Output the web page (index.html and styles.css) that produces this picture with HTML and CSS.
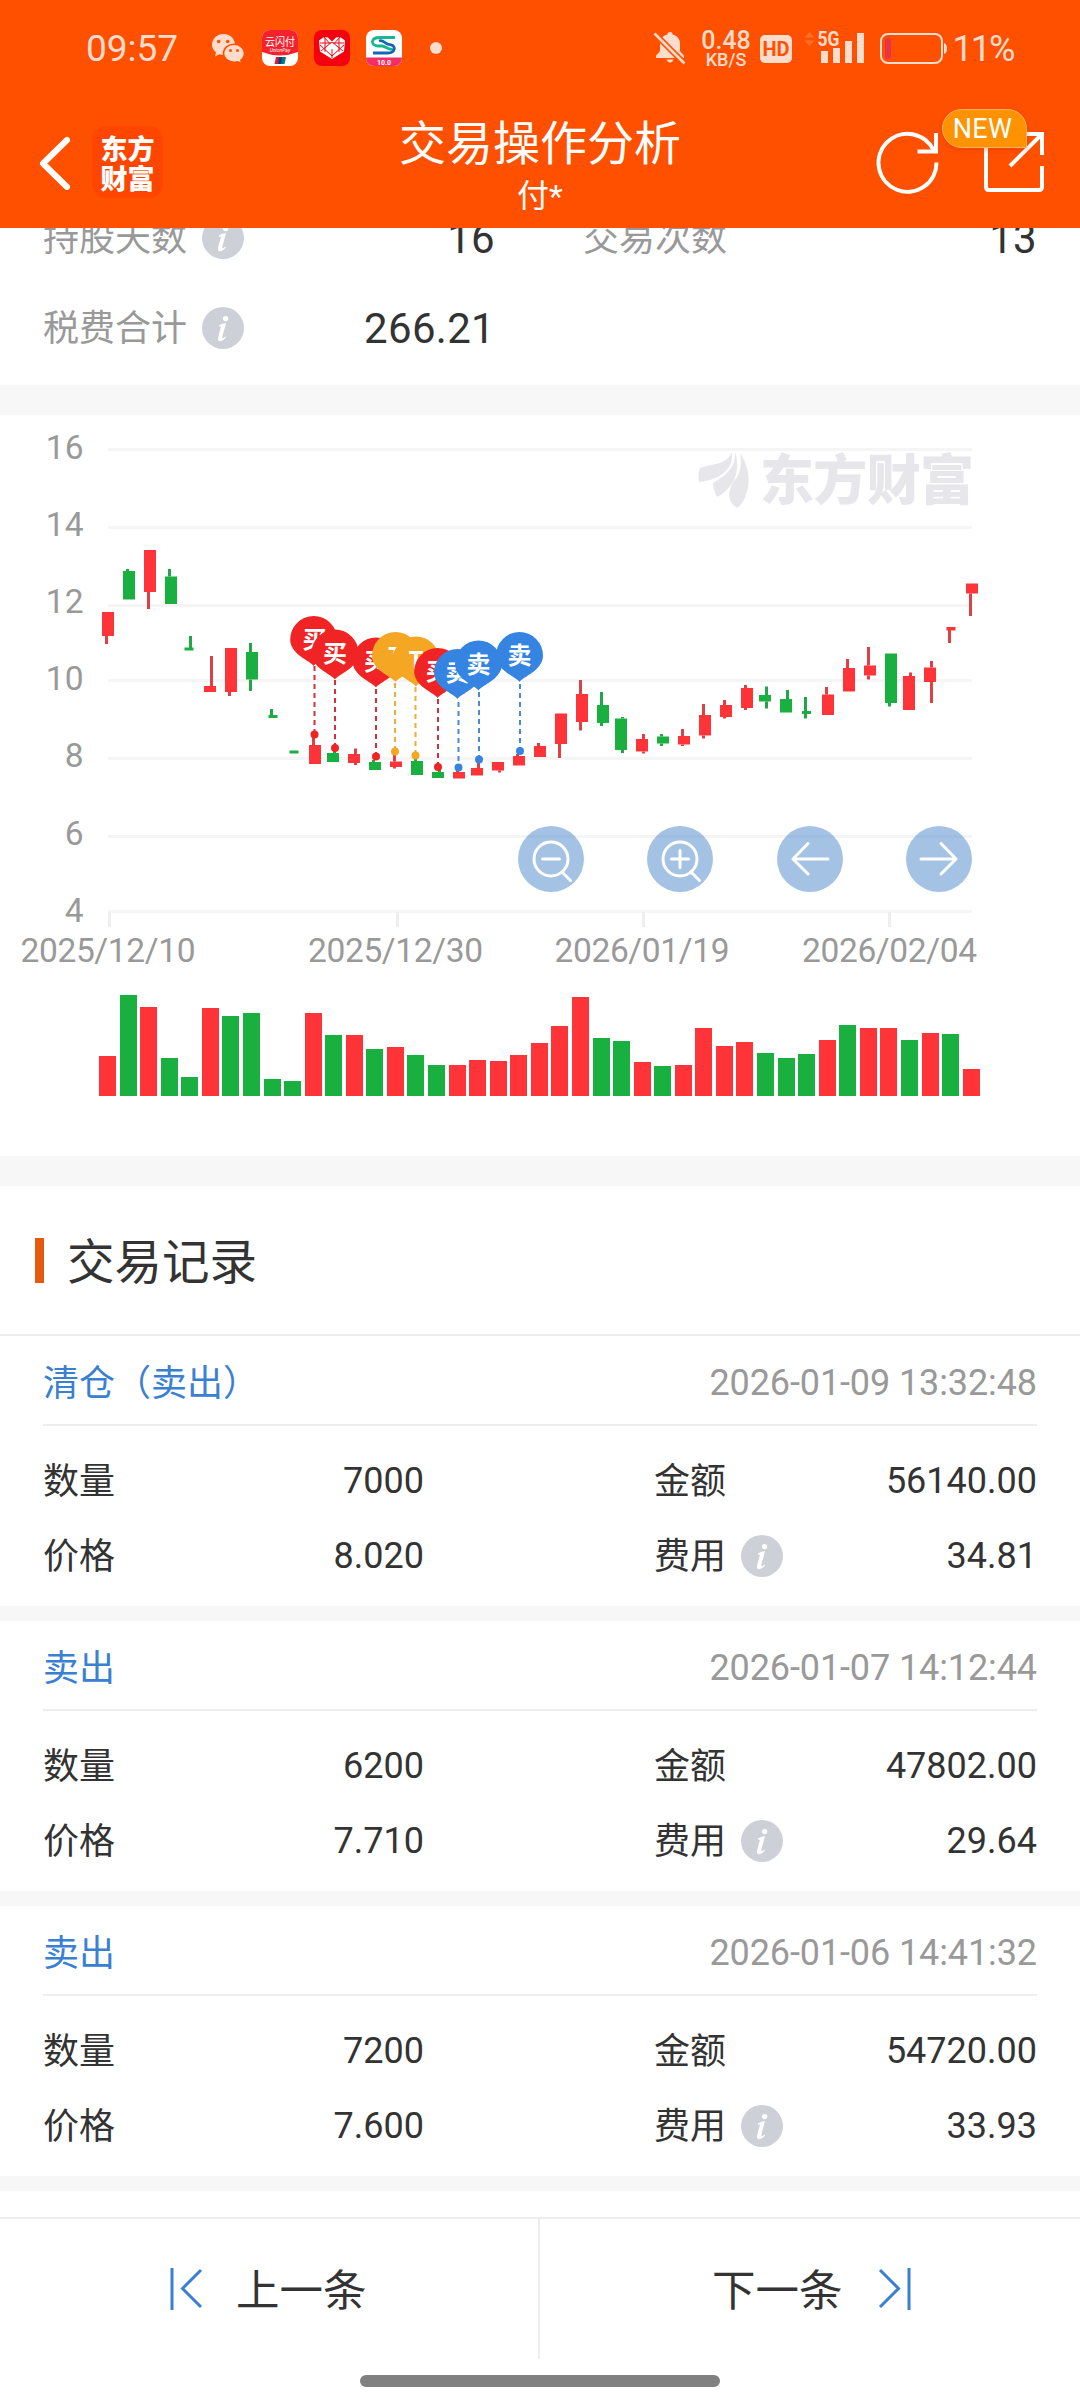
FILE: index.html
```html
<!DOCTYPE html>
<html lang="zh-CN">
<head>
<meta charset="utf-8">
<title>交易操作分析</title>
<link rel="stylesheet" href="styles.css">
</head>
<body>
<svg class="defs" width="0" height="0">
  <defs>
    <symbol id="info" viewBox="0 0 42 42">
      <circle cx="21" cy="21" r="21" fill="#cdd1d7"/>
      <circle cx="23.6" cy="11.6" r="2.7" fill="#fff"/>
      <path d="M17 18.6c2.500-1.800 5.600-2.600 7-2.400-.9 3.600-3.300 11.400-3.700 14-.2 1.500.6 1.600 3.300-.7l.5.7c-2.400 2.900-4.600 4.100-6.300 4-1.700-.2-2.100-1.600-1.700-3.500.5-2.800 2.200-8.300 2.900-11-.4-.4-1.300-.2-2 .2z" fill="#fff"/>
    </symbol>
    <path id="pin" d="M0 0C-3-5-23.500-11.500-23.500-26.500a23.500 23.500 0 0 1 47 0C23.500-11.500 3-5 0 0z"/>
  </defs>
</svg>
<header class="top">
  <div class="status">
    <span class="clock">09:57</span>
    <svg class="apps" width="234" height="40" viewBox="210 28 234 40">
      <g fill="#ffdccb">
        <path d="M223.500 34c-6.300 0-11.500 4.700-11.500 10.500 0 3.200 1.500 6 4 8l-1 4 4.500-2.300c1.300.4 2.500.5 4 .5 6.400 0 11.500-4.500 11.500-10.200S229.900 34 223.500 34z"/>
        <path d="M234 44.300c-5.800 0-10.500 4-10.500 9s4.700 9 10.500 9c1.200 0 2.400-.2 3.500-.6l4.300 2-1-3.400c2.300-1.700 3.700-4.200 3.700-7 0-5-4.700-9-10.500-9z" stroke="#ff5000" stroke-width="1.500"/>
      </g>
      <g fill="#ff5000"><circle cx="218.700" cy="41.500" r="1.800"/><circle cx="227.700" cy="41.500" r="1.800"/><circle cx="230.500" cy="50.500" r="1.500"/><circle cx="237.500" cy="50.500" r="1.500"/></g>
      <rect x="262" y="30" width="36" height="36" rx="8" fill="#fff"/>
      <path d="M262 52V38a8 8 0 0 1 8-8h20a8 8 0 0 1 8 8v14q-18 7-36 0z" fill="#f5222d"/>
      <text x="280" y="45.500" class="app-cn" textLength="30" lengthAdjust="spacingAndGlyphs">云闪付</text>
      <text x="280" y="51.500" class="app-en">UnionPay</text>
      <path d="M276 57h4l-1 7h-4.500z" fill="#e21836"/><path d="M279 57h4l-1 7h-4z" fill="#00447c"/><path d="M282.500 57h3.500l-1.500 7H281z" fill="#007b84"/>
      <rect x="314" y="30" width="36" height="36" rx="8" fill="#f5000f"/>
      <path d="M332 59l-12-7.500-1-11 5-3.500 4 .5 4 4 4-4 4-.5 5 3.500-1 11z" fill="#fff"/>
      <path d="M332 49v9M320 45l12 11 12-11M324 37l8 9 8-9M321 51l11-9 11 9M325 38v14M339 38v14M320 43h24" stroke="#f5000f" stroke-width="1" fill="none"/>
      <path d="M332 42.500l3.500 3.500-3.500 3.500-3.500-3.500z" fill="#fff"/>
      <rect x="366" y="30" width="36" height="36" rx="8" fill="#fff"/>
      <path d="M366 57.500h36v.5a8 8 0 0 1-8 8h-20a8 8 0 0 1-8-8z" fill="#f42e62"/>
      <text x="384" y="64.500" class="app-ver">10.0</text>
      <path d="M395 37.500H380c-9.500 0-10 8-2 8.500h4c4 0 7 5 11 3" fill="none" stroke="#16b98e" stroke-width="2.800"/>
      <path d="M379 41c2-1 4 0 6 1.500 2 2 4 2 6 2.300 5 1 4.500 8.200-3 8.200h-15" fill="none" stroke="#1467b8" stroke-width="2.800"/>
      <circle cx="436" cy="48" r="6" fill="#ffdccb"/>
    </svg>
    <svg class="signals" width="296" height="40" viewBox="652 28 296 40">
      <g fill="#ffdccb">
        <path d="M671 32c2 0 2.500 1 2.500 2.500 5 1 7.500 5 7.500 9V50c0 3 4 4 4 6.500V58h-28v-1.500c0-2.500 4-3.500 4-6.500v-6.500c0-4 2.500-8 7.500-9 0-1.500.5-2.500 2.500-2.500z"/>
        <path d="M667.500 59.500h7q-1 3-3.500 3t-3.500-3z"/>
        <path d="M655.500 33.500l30 30" stroke="#ff5000" stroke-width="6"/>
        <path d="M655.500 33.500l30 30" stroke="#ffdccb" stroke-width="2.500"/>
        <text x="727" y="49.300" class="rate">0.48</text>
        <text x="727" y="66" class="unit">KB/S</text>
        <rect x="761" y="35" width="32" height="28" rx="5"/>
        <text x="777" y="56" class="hd">HD</text>
        <path d="M805.500 37.500l5-5.500 5 5.500zM805.500 40.500h10l-5 5.500z" opacity=".22"/>
        <text x="829.500" y="46" class="net" textLength="22" lengthAdjust="spacingAndGlyphs">5G</text>
        <path d="M822 51h7v12h-7zM834 48h7v15h-7zM846 41h7v22h-7zM858 33h7v30h-7z"/>
        <path d="M945 43q3 1 3 5.500t-3 5.500z"/>
      </g>
      <rect x="882" y="34" width="61" height="29" rx="7" fill="none" stroke="#ffdccb" stroke-width="2"/>
      <rect x="886" y="38" width="6" height="21" rx="3" fill="#e8344a"/>
    </svg>
    <span class="percent">11%</span>
  </div>
  <div class="nav">
    <div class="nav-left">
      <svg width="32" height="54" viewBox="38 136 32 54"><path d="M67 140L43 163.500 67 187" fill="none" stroke="#fff" stroke-width="6" stroke-linecap="round" stroke-linejoin="round"/></svg>
      <div class="brand"><span>东方</span><span>财富</span></div>
    </div>
    <div class="heading"><h1>交易操作分析</h1><p>付*</p></div>
    <div class="nav-right">
      <svg width="172" height="72" viewBox="876 126 172 72" fill="none" stroke="#fff" stroke-width="4">
        <path d="M937.500 162.500A29 29 0 1 1 935 151"/>
        <path d="M937 133v18.500h-18.500"/>
        <path d="M987 146v41q0 3 3 3h50q3 0 3-3v-21M1022 134h21v21M1011 166l31.500-31.500"/>
      </svg>
      <span class="new">NEW</span>
    </div>
  </div>
</header>
<main>
  <section class="summary">
    <div class="srow">
      <span class="lab">持股天数<svg class="i"><use href="#info"/></svg></span><b>16</b>
      <span class="lab second">交易次数</span><b>13</b>
    </div>
    <div class="srow">
      <span class="lab">税费合计<svg class="i"><use href="#info"/></svg></span><b>266.21</b>
    </div>
  </section>
  <section class="chart">
    <svg width="1080" height="741" viewBox="0 415 1080 741">
      <path fill="#f5f5f6" d="M108 448h864v3H108zM108 526h864v3H108zM108 604h864v3H108zM108 679h864v3H108zM108 757h864v3H108zM108 835h864v3H108zM108 910h864v3H108z"/>
      <path fill="#eee" d="M108 912h3v15h-3zM396 912h3v15h-3zM642 912h3v15h-3zM888 912h3v15h-3z"/>
      <g class="axis" text-anchor="end">
        <text x="83.500" y="459">16</text><text x="83.500" y="536">14</text><text x="83.500" y="613">12</text><text x="83.500" y="690">10</text><text x="83.500" y="767">8</text><text x="83.500" y="845">6</text><text x="83.500" y="922">4</text>
      </g>
      <g class="axis" text-anchor="middle">
        <text x="108" y="962" textLength="175">2025/12/10</text><text x="395.500" y="962" textLength="175">2025/12/30</text><text x="642" y="962" textLength="175">2026/01/19</text><text x="889.500" y="962" textLength="175">2026/02/04</text>
      </g>
      <g fill="#e6e6eb">
        <path d="M732 452C728 464 712 464 700 468c-2 5-2 10-1 14 20-2 35-12 33-30zM735 452c1 16-9 23-22 31 0 5 2 10 4 14 15-8 25-24 18-45zM740 453c9 13 11 30 6 41-1 6-5 11-9 14-11-7-9-20-2-28 5-6 7-16 5-27z"/>
        <text x="760" y="500" class="mark" textLength="214">东方财富</text>
      </g>
      <g fill="#ff3438">
        <path d="M102 612h12v24h-12zM144 550h12v42h-12zM204 686h12v6h-12zM225 648h12v44h-12zM309 745h12v19h-12zM348 754h12v9h-12zM390 761.500h12v5.500h-12zM453 772h12v6.500h-12zM471 768h12v7.500h-12zM492 762h12v8.500h-12zM513 756h12v9.500h-12zM534 746h12v11h-12zM555 713.500h12V744h-12zM576 694h12v28h-12zM636 739h12v12.500h-12zM678 736h12v8.500h-12zM699 715h12v20.500h-12zM720 705h12v12h-12zM741 688h12v20h-12zM822 694.500h12V715h-12zM843 668h12v23.500h-12zM864 665.500h12v10h-12zM903 676h12v34h-12zM924 667.500h12V682h-12zM946.500 627h9v3.500h-9zM966 583.500h12v10h-12z"/>
        <path fill="#dc4245" d="M105 636h3v8h-3zM147 592h3v17h-3zM210 656h3v30h-3zM228 692h3v4h-3zM312 738h3v7h-3zM354 748.500h3v5.500h-3zM354 763h3v2h-3zM393 755h3v6.500h-3zM393 767h3v1.500h-3zM456 769h3v3h-3zM477 763h3v5h-3zM498 770.500h3v2h-3zM516 754h3v2h-3zM537 743h3v3h-3zM558 744h3v14h-3zM579 680h3v14h-3zM579 722h3v8.500h-3zM642 734h3v5h-3zM642 751.500h3v2h-3zM681 729h3v7h-3zM681 744.500h3v1.500h-3zM702 704h3v11h-3zM702 735.500h3v3h-3zM723 700h3v5h-3zM723 717h3v1.500h-3zM744 685h3v3h-3zM744 708h3v2h-3zM825 687h3v7.500h-3zM846 659h3v9h-3zM867 647h3v18.500h-3zM867 675.500h3v4h-3zM909 672.500h3v3.500h-3zM930 661h3v6.500h-3zM930 682h3v21h-3zM948 630h3v13h-3zM969 593.500h3V616h-3z"/>
      </g>
      <g fill="#1ab03f">
        <path d="M123 571h12v28.500h-12zM165 576.500h12V604h-12zM184.500 647.500h9v3h-9zM246 652h12v27.500h-12zM268.500 715h9v3h-9zM289.500 750.500h9v3h-9zM327 753h12v9h-12zM369 762h12v8h-12zM411 761h12v14h-12zM432 772h12v6h-12zM597 705h12v18h-12zM615 718.500h12V750h-12zM657 736.500h12v7h-12zM759 695h12v6.500h-12zM780 699h12v13.500h-12zM802 711h9v3h-9zM885 653.500h12V703h-12z"/>
        <path fill="#24a548" d="M126 569h3v2h-3zM168 569h3v7.500h-3zM189 636h3v12h-3zM249 643h3v9h-3zM249 679.500h3V691h-3zM270 709h3v6h-3zM333 750h3v3h-3zM372 760h3v2h-3zM414 758h3v3h-3zM438 769h3v3h-3zM600 692h3v13h-3zM600 723h3v3h-3zM621 717h3v1.500h-3zM621 750h3v3h-3zM660 734h3v2.500h-3zM660 743.500h3v2.500h-3zM765 686.500h3v8.500h-3zM765 701.500h3v7h-3zM786 690h3v9h-3zM804 697h3v21.500h-3zM888 703h3v3.500h-3z"/>
      </g>
      <g class="leads">
        <path stroke="#d23237" d="M314.500 666v66M335 680v66M376 689v66M438 699v66"/>
        <path stroke="#eeab38" d="M395 683v66M415.500 687v66"/>
        <path stroke="#498ad3" d="M458.500 702v64M479 692v66M520 684v66"/>
      </g>
      <g fill="#f02424"><circle cx="314.500" cy="734.500" r="4"/><circle cx="335" cy="748" r="4"/><circle cx="376" cy="756.500" r="4"/><circle cx="438" cy="767" r="4"/></g>
      <g fill="#f5a623"><circle cx="395" cy="751.500" r="4"/><circle cx="415.500" cy="755.500" r="4"/></g>
      <g fill="#3684e2"><circle cx="458.500" cy="767.500" r="4"/><circle cx="479" cy="759.500" r="4"/><circle cx="520" cy="751" r="4"/></g>
      <g class="pins">
        <use href="#pin" x="313.700" y="666" fill="#f02424"/><text x="314.500" y="648">买</text>
        <use href="#pin" x="335" y="679.500" fill="#f02424"/><text x="335" y="661.500">买</text>
        <use href="#pin" x="376" y="687.500" fill="#f02424"/><text x="376" y="669.500">买</text>
        <use href="#pin" x="395.500" y="682" fill="#f5a623"/><text x="395.500" y="665">T</text>
        <use href="#pin" x="416" y="686.500" fill="#f5a623"/><text x="416" y="669">T</text>
        <use href="#pin" x="437.700" y="698" fill="#f02424"/><text x="437.700" y="680">买</text>
        <use href="#pin" x="457.500" y="699" fill="#3684e2"/><text x="457.500" y="681">卖</text>
        <use href="#pin" x="478.500" y="690.500" fill="#3684e2"/><text x="478.500" y="672.500">卖</text>
        <use href="#pin" x="519.500" y="682" fill="#3684e2"/><text x="519.500" y="664">卖</text>
      </g>
    </svg>
    <div class="tools">
      <svg viewBox="0 0 66 66"><circle class="disc" cx="33" cy="33" r="33"/><circle cx="33" cy="33" r="17"/><path d="M24.500 33h17M44 46l8.500 8.500"/></svg>
      <svg viewBox="0 0 66 66"><circle class="disc" cx="33" cy="33" r="33"/><circle cx="33" cy="33" r="17"/><path d="M24.500 33h17M33 24.500v17M44 46l8.500 8.500"/></svg>
      <svg viewBox="0 0 66 66"><circle class="disc" cx="33" cy="33" r="33"/><path d="M51 33H16M31 17.500L16 33l15 15"/></svg>
      <svg viewBox="0 0 66 66"><circle class="disc" cx="33" cy="33" r="33"/><path d="M15 33h35M35 17.500L50 33 35 48"/></svg>
    </div>
    <div class="volume">
      <i style="height:40px"></i><i class="g" style="height:101.500px"></i><i style="height:89.500px"></i><i class="g" style="height:38.500px"></i><i class="g" style="height:19.500px"></i><i style="height:88px"></i><i class="g" style="height:80.500px"></i><i class="g" style="height:83.500px"></i><i class="g" style="height:17.500px"></i><i class="g" style="height:15.500px"></i><i style="height:83.500px"></i><i class="g" style="height:61.500px"></i><i style="height:61.500px"></i><i class="g" style="height:47.500px"></i><i style="height:49.500px"></i><i class="g" style="height:41.500px"></i><i class="g" style="height:31.500px"></i><i style="height:31.500px"></i><i style="height:36.500px"></i><i style="height:35.500px"></i><i style="height:41.500px"></i><i style="height:53px"></i><i style="height:70px"></i><i style="height:99.500px"></i><i class="g" style="height:58px"></i><i class="g" style="height:55px"></i><i style="height:34px"></i><i class="g" style="height:30px"></i><i style="height:31px"></i><i style="height:68px"></i><i style="height:50px"></i><i style="height:54px"></i><i class="g" style="height:43px"></i><i class="g" style="height:38px"></i><i class="g" style="height:42px"></i><i style="height:56px"></i><i class="g" style="height:71px"></i><i style="height:68.500px"></i><i style="height:68px"></i><i class="g" style="height:56px"></i><i style="height:63px"></i><i class="g" style="height:62px"></i><i style="height:27px"></i>
    </div>
  </section>
  <section class="records">
    <h2><span>交易记录</span></h2>
    <article>
      <div class="rhead"><span>清仓（卖出）</span><time>2026-01-09 13:32:48</time></div>
      <div class="rbody">
        <span>数量</span><b>7000</b><span class="c3">金额</span><b>56140.00</b>
        <span>价格</span><b>8.020</b><span class="c3">费用<svg class="i"><use href="#info"/></svg></span><b>34.81</b>
      </div>
    </article>
    <article>
      <div class="rhead"><span>卖出</span><time>2026-01-07 14:12:44</time></div>
      <div class="rbody">
        <span>数量</span><b>6200</b><span class="c3">金额</span><b>47802.00</b>
        <span>价格</span><b>7.710</b><span class="c3">费用<svg class="i"><use href="#info"/></svg></span><b>29.64</b>
      </div>
    </article>
    <article>
      <div class="rhead"><span>卖出</span><time>2026-01-06 14:41:32</time></div>
      <div class="rbody">
        <span>数量</span><b>7200</b><span class="c3">金额</span><b>54720.00</b>
        <span>价格</span><b>7.600</b><span class="c3">费用<svg class="i"><use href="#info"/></svg></span><b>33.93</b>
      </div>
    </article>
  </section>
</main>
<footer>
  <div class="pager">
    <div class="prev"><svg width="34" height="42" viewBox="0 0 34 42"><path d="M2 0v42M31 2L12.500 20.500 31 39"/></svg><span>上一条</span></div>
    <div class="next"><span>下一条</span><svg width="34" height="42" viewBox="0 0 34 42"><path d="M32 0v42M3 2l18.500 18.500L3 39"/></svg></div>
  </div>
  <div class="home"></div>
</footer>
</body>
</html>
```

FILE: styles.css
```css
* { box-sizing: border-box; }
body {
  margin: 0;
  width: 1080px;
  height: 2408px;
  display: flex;
  flex-direction: column;
  overflow: hidden;
  background: #fff;
  color: #333;
  font: 36px/1 Roboto, "Noto Sans CJK SC", sans-serif;
}
svg { display: block; flex: none; }
b { font-weight: 400; }
.defs { position: absolute; }

.top { height: 228px; flex: none; background: #ff5000; color: #fff; }
.status { height: 96px; display: flex; align-items: center; padding-left: 86px; color: #ffdccb; }
.clock { width: 124px; font-size: 37px; padding-top: 1px; }
.signals { margin-left: 206.5px; }
.percent { margin-left: 6px; padding-top: 1px; font-size: 36px; letter-spacing: -2px; }
.status text { font-family: Roboto, "Noto Sans CJK SC", sans-serif; text-anchor: middle; }
.status .app-cn { font-size: 11px; fill: #fff; }
.status .app-en { font-size: 5px; font-style: italic; fill: #fff; }
.status .app-ver { font-size: 7px; font-weight: 700; fill: #fff; }
.rate { font-size: 25px; font-weight: 500; }
.unit { font-size: 18px; font-weight: 500; }
.hd { font-size: 20px; font-weight: 700; fill: #ff5000; }
.net { font-size: 20px; font-weight: 700; }

.nav { height: 132px; display: grid; grid-template-columns: 300px 1fr 300px; }
.nav-left { display: flex; align-items: flex-start; padding: 30px 0 0 38px; gap: 22px; }
.nav-left > svg { margin-top: 10px; }
.brand {
  width: 71px; height: 72px;
  border-radius: 14px;
  background: #ff4600;
  display: flex; flex-direction: column; justify-content: center; align-items: center;
  gap: 3px;
  font: 900 27px/27px "Noto Sans CJK SC", sans-serif;
}
.heading { text-align: center; padding-top: 21px; }
.heading h1 { margin: 0; font-size: 47px; line-height: 54px; font-weight: 400; }
.heading p { margin: 7px 0 0; font-size: 32px; line-height: 36px; }
.nav-right { position: relative; padding: 30px 0 0 95px; }
.new {
  position: absolute; left: 162px; top: 13px;
  width: 85px; height: 39px;
  background: #ff9200;
  border: 1.5px solid #ffb25e;
  border-radius: 20px 20px 0 20px;
  box-shadow: 0 2px 5px rgba(190, 50, 0, .3);
  padding-right: 4px;
  font-size: 27px; line-height: 39px; text-align: center; letter-spacing: .3px;
}

main { height: 1989px; flex: none; overflow: hidden; }
.i { width: 42px; height: 42px; display: inline-block; margin: -2px 0 0 15px; }
.summary { height: 193px; margin-top: -36px; padding: 2px 43px 0; }
.srow { height: 90px; display: grid; grid-template-columns: 220px 232px 231px 1fr; align-items: center; }
.srow b { font-size: 42px; text-align: right; letter-spacing: .3px; }
.lab { display: flex; align-items: center; color: #999; }
.second { padding-left: 88px; white-space: nowrap; }
.chart { position: relative; height: 801px; border: solid #f7f7f7; border-width: 30px 0; }
.axis { font: 33.500px Roboto, sans-serif; fill: #999; }
.mark { font: 900 54px "Noto Sans CJK SC", sans-serif; }
.leads { fill: none; stroke-width: 2; stroke-dasharray: 5 4; }
.pins text { font: 700 24px "Noto Sans CJK SC", sans-serif; fill: #fff; text-anchor: middle; }
.tools { position: absolute; left: 518px; top: 411px; width: 454px; display: flex; justify-content: space-between; }
.tools svg { width: 66px; height: 66px; fill: none; stroke: #fff; stroke-width: 3; stroke-linecap: round; stroke-linejoin: round; }
.tools .disc { fill: #4985c9; fill-opacity: .5; stroke: none; }
.volume {
  position: absolute; left: 99px; top: 579px; width: 881px; height: 102px;
  display: flex; align-items: flex-end; justify-content: space-between;
}
.volume i { width: 17px; background: #ff3438; }
.volume .g { background: #1ab03f; }

h2 {
  margin: 0; height: 150px; padding: 0 0 0 35px;
  display: flex; align-items: center; gap: 23px;
  border-bottom: 2px solid #eee;
  font-size: 47.500px; line-height: 54px; font-weight: 400;
}
h2::before { content: ""; width: 9px; height: 45px; background: #e65a10; }
h2 span { padding-top: 5px; }
article { height: 285px; padding: 0 43px; border-bottom: 15px solid #f7f7f7; }
.rhead { height: 90px; display: flex; align-items: center; justify-content: space-between; border-bottom: 2px solid #eee; padding-top: 6px; color: #3a80d2; }
.rhead span { padding-top: 2px; }
time { color: #999; letter-spacing: -.1px; }
.rbody { display: grid; grid-template-columns: 150px 231px 381px 1fr; grid-auto-rows: 75px; align-items: center; padding-top: 17px; }
.rbody span { padding-top: 2px; }
.rbody b { text-align: right; }
.c3 { padding-left: 230px; display: flex; align-items: center; }

footer { height: 191px; border-top: 2px solid #eee; }
.pager { height: 140px; display: flex; font-size: 43.500px; }
.pager > div { width: 541px; display: flex; align-items: center; }
.pager svg { fill: none; stroke: #3a80d2; stroke-width: 3; }
.pager span { padding-top: 6px; }
.prev { padding-left: 170px; gap: 32px; border-right: 2px solid #eee; }
.next { padding-left: 172px; gap: 34px; }
.home { width: 360px; height: 12px; margin: 16px auto 0; border-radius: 6px; background: #808080; }
```
